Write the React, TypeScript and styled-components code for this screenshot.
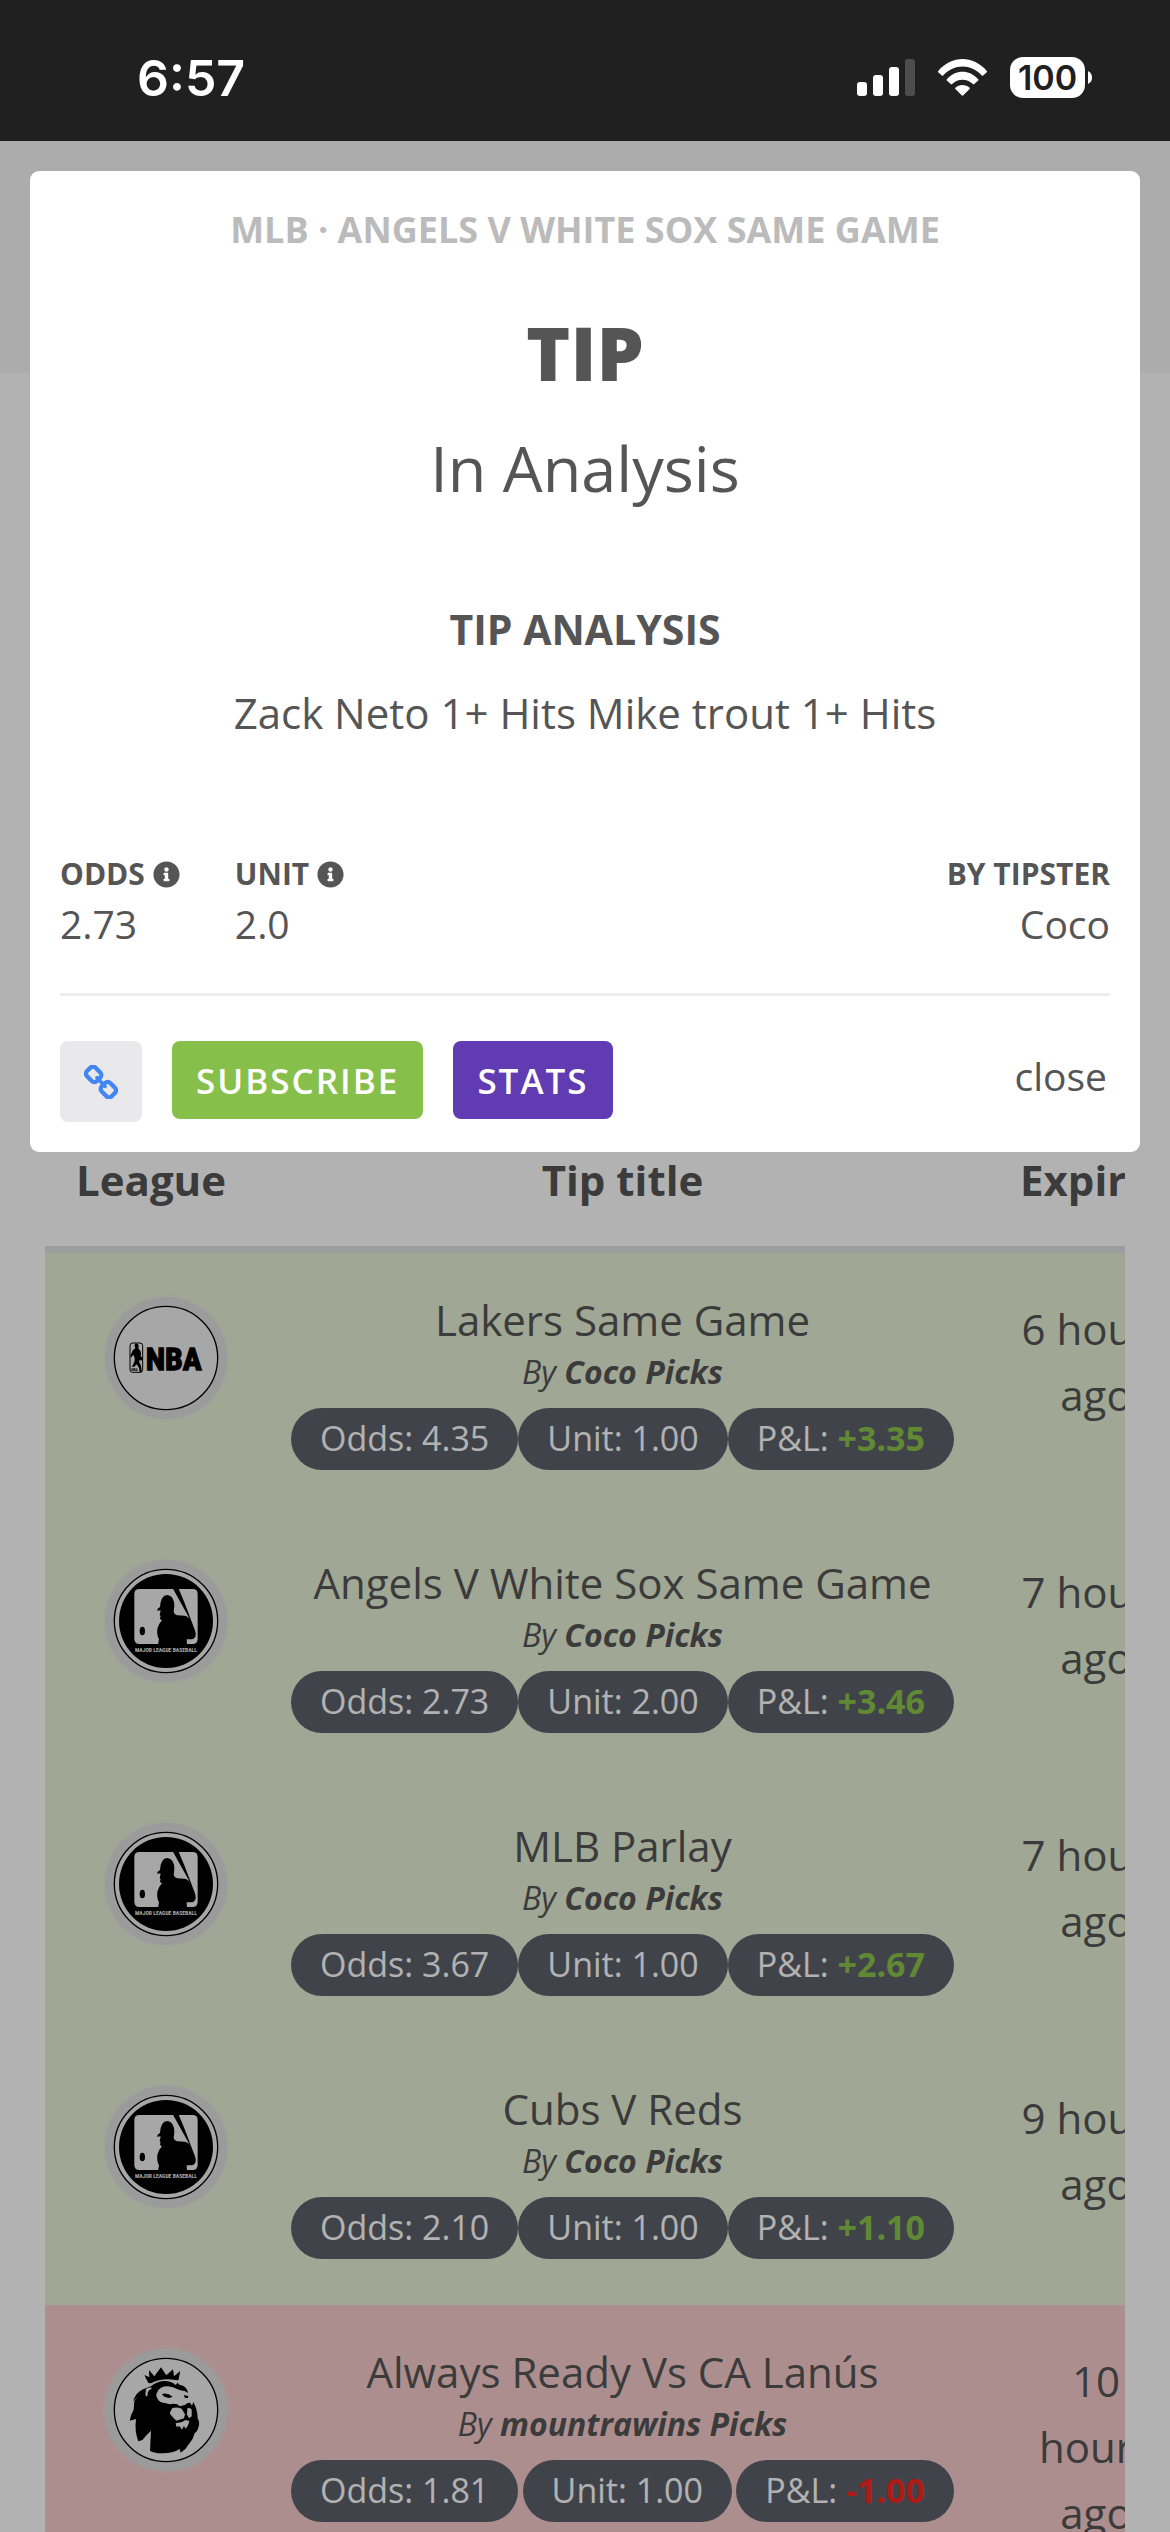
import React from "react";
import styled, { createGlobalStyle } from "styled-components";
import { FaInfoCircle } from "react-icons/fa";

type League = "nba" | "mlb" | "epl";

interface Tip {
  id: number;
  league: League;
  title: string;
  tipster: string;
  odds: string;
  unit: string;
  profit: string;
  won: boolean;
  expires: string;
}

const tips: Tip[] = [
  { id: 1, league: "nba", title: "Lakers Same Game", tipster: "Coco Picks", odds: "4.35", unit: "1.00", profit: "+3.35", won: true, expires: "6 hours ago" },
  { id: 2, league: "mlb", title: "Angels V White Sox Same Game", tipster: "Coco Picks", odds: "2.73", unit: "2.00", profit: "+3.46", won: true, expires: "7 hours ago" },
  { id: 3, league: "mlb", title: "MLB Parlay", tipster: "Coco Picks", odds: "3.67", unit: "1.00", profit: "+2.67", won: true, expires: "7 hours ago" },
  { id: 4, league: "mlb", title: "Cubs V Reds", tipster: "Coco Picks", odds: "2.10", unit: "1.00", profit: "+1.10", won: true, expires: "9 hours ago" },
  { id: 5, league: "epl", title: "Always Ready Vs CA Lanús", tipster: "mountrawins Picks", odds: "1.81", unit: "1.00", profit: "-1.00", won: false, expires: "10 hours ago" },
];

const GlobalStyle = createGlobalStyle`
  * {
    box-sizing: border-box;
  }

  body {
    margin: 0;
    background: #fff;
    color: #555;
    font-family: "Open Sans", "Noto Sans", sans-serif;
    font-size: 42px;
  }
`;

const Screen = styled.div`
  position: relative;
  display: flex;
  flex-direction: column;
  height: 100vh;
  overflow: hidden;
`;

const StatusBar = styled.header`
  display: flex;
  flex-shrink: 0;
  align-items: center;
  justify-content: space-between;
  height: 141px;
  padding: 14px 78px 0 137px;
  background: #202020;
  color: #fff;
  font-family: Inter, sans-serif;
`;

const Clock = styled.time`
  font-size: 50px;
  font-weight: 600;
  line-height: 60px;
`;

const StatusIcons = styled.div`
  display: flex;
  align-items: center;
  gap: 22px;
`;

const Battery = styled.div`
  display: flex;
  align-items: center;
  gap: 3px;
`;

const BatteryLevel = styled.span`
  width: 75px;
  height: 41px;
  border-radius: 13px;
  background: #fff;
  color: #202020;
  font-size: 34px;
  font-weight: 600;
  line-height: 41px;
  text-align: center;
`;

const Page = styled.main`
  position: relative;
  flex: 1;
  overflow: hidden;
`;

const PageHeader = styled.div`
  height: 232px;
  background: #f6f6f6;
`;

const TableWrapper = styled.div`
  margin: 759px 45px 0;
  overflow: hidden;
`;

const TipsTable = styled.table`
  width: calc(100% + 109px);
  table-layout: fixed;
  border-collapse: separate;
  border-spacing: 0;
`;

const LeagueColumn = styled.col`
  width: 242px;
`;

const ExpiresColumn = styled.col`
  width: 276px;
`;

const HeadCell = styled.th`
  padding: 17px 30px 36px 0;
  border-bottom: 7px solid #dfe1e3;
  font-weight: 700;
  line-height: 61px;

  &:nth-child(2),
  &:last-child {
    padding-right: 0;
  }
`;

const Row = styled.tr<{ $won: boolean }>`
  height: 263px;
  background: ${({ $won }) => ($won ? "#e7f0d6" : "#f7cccc")};
`;

const Cell = styled.td`
  padding: 40px 4px 0;
  text-align: center;
  vertical-align: top;
`;

const ExpiresCell = styled(Cell)`
  padding: 43px 58px 0;
  line-height: 66px;
`;

const TipName = styled.div`
  line-height: 54px;
  white-space: nowrap;
`;

const TipAuthor = styled.div`
  font-size: 32px;
  font-style: italic;
  line-height: 50px;
`;

const Badges = styled.div`
  display: flex;
  justify-content: space-between;
  margin-top: 11px;
`;

const Badge = styled.span`
  padding: 0 29px 2px;
  border-radius: 31px;
  background: #5d616b;
  color: #fff;
  font-size: 34px;
  line-height: 60px;
  white-space: nowrap;
`;

const Profit = styled.strong<{ $won: boolean }>`
  color: ${({ $won }) => ($won ? "#8bc34a" : "#f8281e")};
`;

const Logo = styled.svg`
  display: block;
  width: 122px;
  height: 122px;
  margin: 4px auto 0;
  border-radius: 50%;
  background: #dfdfe0;
  box-shadow: 0 0 4px #dfdfe0;
`;

const LogoText = styled.text`
  font-family: "Roboto Condensed", Roboto, sans-serif;
  font-weight: 700;
`;

const Backdrop = styled.div`
  position: absolute;
  inset: 0;
  padding: 30px;
  background: rgba(0, 0, 0, 0.3);
`;

const Modal = styled.section`
  padding: 34px 30px 30px;
  border-radius: 9px;
  background: #fff;
  text-align: center;
`;

const MatchTitle = styled.h2`
  margin: 0;
  color: #bbb;
  font-size: 36px;
  font-weight: 700;
  line-height: 50px;
  text-transform: uppercase;
`;

const Heading = styled.h1`
  margin: 45px 0 0;
  font-size: 75px;
  font-weight: 800;
  line-height: 104px;
`;

const Status = styled.p`
  margin: 20px 0 0;
  font-size: 63px;
  line-height: 88px;
`;

const AnalysisTitle = styled.h3`
  margin: 88px 0 0;
  font-size: 41px;
  font-weight: 700;
  line-height: 58px;
`;

const AnalysisText = styled.p`
  margin: 26px 0 0;
  line-height: 58px;
`;

const Details = styled.dl`
  display: flex;
  gap: 55px;
  margin: 111px 0 0;
  padding-bottom: 42px;
  border-bottom: 3px solid #ededed;
  text-align: left;
`;

const Detail = styled.div<{ $end?: boolean }>`
  ${({ $end }) => $end && "margin-left: auto; text-align: right;"}
`;

const DetailLabel = styled.dt`
  display: flex;
  align-items: center;
  gap: 8px;
  font-size: 30px;
  font-weight: 700;
  line-height: 42px;

  svg {
    width: 27px;
    height: 27px;
  }
`;

const DetailValue = styled.dd`
  margin: 2px 0 0;
  font-size: 39px;
  line-height: 54px;
`;

const Actions = styled.div`
  display: flex;
  align-items: flex-start;
  gap: 30px;
  margin-top: 45px;
`;

const ShareLink = styled.a`
  display: flex;
  align-items: center;
  justify-content: center;
  width: 82px;
  height: 81px;
  border-radius: 8px;
  background: #e9e9eb;
`;

const ActionButton = styled.button<{ $color: string }>`
  height: 78px;
  padding: 0 24px;
  border: 0;
  border-radius: 8px;
  background: ${({ $color }) => $color};
  color: #fff;
  font-family: inherit;
  font-size: 35px;
  font-weight: 600;
  letter-spacing: 2px;
  text-transform: uppercase;
`;

const CloseButton = styled.button`
  margin-left: auto;
  padding: 0 3px;
  border: 0;
  background: none;
  color: inherit;
  font-family: inherit;
  font-size: 39px;
  line-height: 70px;
`;

const SignalIcon = () => (
  <svg width="58" height="37" viewBox="0 0 58 37" fill="#fff" aria-hidden="true">
    <rect x="0" y="23" width="10" height="14" rx="3" />
    <rect x="16" y="16" width="10" height="21" rx="3" />
    <rect x="32" y="8" width="10" height="29" rx="3" />
    <rect x="48" y="0" width="10" height="37" rx="3" fill="#4d4d4d" />
  </svg>
);

const WifiIcon = () => (
  <svg width="51" height="37" viewBox="0 0 153 112" fill="#fff" aria-hidden="true">
    <path d="M3 36C44-12 109-12 150 36Q152 38 150 40L139 50Q137 52 135 50C101 14 52 14 18 50Q16 52 14 50L3 40Q1 38 3 36Z" />
    <path d="M29 61C56 31 97 31 124 61Q126 63 124 65L112 76Q110 78 108 76C90 58 63 58 45 76Q43 78 41 76L29 65Q27 63 29 61Z" />
    <path d="M55 87C66 76 87 76 98 87Q100 89 98 91L79 110Q76.500 112 74 110L55 91Q53 89 55 87Z" />
  </svg>
);

const ChainIcon = () => (
  <svg width="34" height="34" viewBox="0 0 102 102" fill="none" stroke="#4285f4" strokeWidth="13" aria-hidden="true">
    <rect x="8" y="10" width="42" height="36" rx="11" transform="rotate(45 29 28)" />
    <rect x="52" y="56" width="42" height="36" rx="11" transform="rotate(45 73 74)" />
    <path d="M39 38L63 64" strokeWidth="11" strokeLinecap="round" />
  </svg>
);

const LogoRing = ({ cy }: { cy: number }) => (
  <circle cx="229" cy={cy} r="155" fill="#efefef" stroke="#000" strokeWidth="4" />
);

const NbaLogo = () => (
  <Logo viewBox="46 52 366 366" role="img" aria-label="NBA">
    <LogoRing cy={235} />
    <rect x="121" y="190" width="38" height="88" rx="8" fill="#efefef" stroke="#000" strokeWidth="3" />
    <path d="M136 192Q146 189 147 200L146 206Q153 212 154 222L153 230Q160 233 159 240Q155 244 149 241L149 249Q156 257 156 277L150 277Q149 262 141 254L134 261L126 261Q137 247 135 235L131 225L124 234L122 228L130 211L137 206Q133 199 136 192Z" />
    <LogoText x="125" y="273" fontSize="11">NBA</LogoText>
    <LogoText x="168" y="270" fontSize="95" stroke="#000" strokeWidth="4">NBA</LogoText>
  </Logo>
);

const MlbLogo = () => (
  <Logo viewBox="46 60 366 366" role="img" aria-label="MLB">
    <LogoRing cy={243} />
    <circle cx="229" cy="243" r="141" />
    <rect x="134" y="147" width="190" height="165" rx="14" fill="#efefef" />
    <ellipse cx="158" cy="273" rx="8" ry="13" />
    <path d="M250 146H267L284 187L313 263Q320 278 317 290Q312 298 305 298L291 298L292 314H205L208 298Q201 286 203 266Q208 250 217 241Q208 238 213 228L210 226L213 211L202 212Q203 204 211 201Q213 166 233 165Q254 167 254 199L252 216Q254 224 262 226L285 227Q292 228 298 234L302 240Z" />
    <LogoText x="229" y="337" fontSize="17" textAnchor="middle" fill="#efefef">MAJOR LEAGUE BASEBALL</LogoText>
  </Logo>
);

const EplLogo = () => (
  <Logo viewBox="46 60 366 366" role="img" aria-label="Premier League">
    <LogoRing cy={243} />
    <path d="M176 162L164 138L179 145L178 123L194 142L214 115L230 139L250 121L253 142L272 126L266 154L257 153Q215 146 184 163Z" />
    <path d="M184 172Q199 158 223 156Q246 156 258 168L264 161Q267 168 280 170Q292 176 295 192Q286 184 272 184L262 180Q245 170 228 172Q207 176 203 190Q196 197 204 210Q211 222 226 222L240 226Q253 222 263 226L270 232L286 228Q294 220 301 221L307 230L311 219Q324 243 324 268Q332 283 326 296L322 306L315 313Q311 330 300 342L287 360L273 371L270 360Q247 374 216 373Q191 372 181 365L184 305Q170 318 158 333L146 337Q134 307 139 270L120 275Q123 257 132 242L134 216L144 205L130 217Q139 190 160 181L172 176Z" />
    <path d="M169 180Q177 174 187 176L184 181Q174 183 173 201Q168 205 167 195Z" fill="#efefef" />
    <path d="M207 190Q222 177 244 180Q256 183 260 195Q273 198 280 206L289 202L298 210L300 219L288 223L280 217L266 221L249 211Q227 215 205 203Z" fill="#efefef" />
    <path d="M217 195Q233 190 249 203L240 207Q221 206 217 195ZM282 198L296 201L295 207L286 207Z" />
    <path d="M248 237Q262 233 276 239L286 256L283 268L260 275Q245 262 240 252Z" fill="#efefef" />
    <path d="M293 238Q303 235 306 242L306 262L298 268L292 256Z" fill="#efefef" />
    <path d="M258 283L277 279L288 273L299 276Q296 292 287 299L283 290L277 302L270 292L260 293Z" fill="#efefef" />
  </Logo>
);

const logos: Record<League, React.FC> = {
  nba: NbaLogo,
  mlb: MlbLogo,
  epl: EplLogo,
};

interface TipRowProps {
  tip: Tip;
}

const TipRow: React.FC<TipRowProps> = ({ tip }) => {
  const LeagueLogo = logos[tip.league];

  return (
    <Row $won={tip.won}>
      <Cell>
        <LeagueLogo />
      </Cell>
      <Cell>
        <TipName>{tip.title}</TipName>
        <TipAuthor>
          By <strong>{tip.tipster}</strong>
        </TipAuthor>
        <Badges>
          <Badge>Odds: {tip.odds}</Badge>
          <Badge>Unit: {tip.unit}</Badge>
          <Badge>
            P&amp;L: <Profit $won={tip.won}>{tip.profit}</Profit>
          </Badge>
        </Badges>
      </Cell>
      <ExpiresCell>{tip.expires}</ExpiresCell>
    </Row>
  );
};

const TipModal = () => (
  <Modal role="dialog" aria-labelledby="tip-heading">
    <MatchTitle>MLB · Angels V White Sox Same Game</MatchTitle>
    <Heading id="tip-heading">TIP</Heading>
    <Status>In Analysis</Status>
    <AnalysisTitle>TIP ANALYSIS</AnalysisTitle>
    <AnalysisText>Zack Neto 1+ Hits Mike trout 1+ Hits</AnalysisText>
    <Details>
      <Detail>
        <DetailLabel>
          ODDS <FaInfoCircle />
        </DetailLabel>
        <DetailValue>2.73</DetailValue>
      </Detail>
      <Detail>
        <DetailLabel>
          UNIT <FaInfoCircle />
        </DetailLabel>
        <DetailValue>2.0</DetailValue>
      </Detail>
      <Detail $end>
        <DetailLabel>BY TIPSTER</DetailLabel>
        <DetailValue>Coco</DetailValue>
      </Detail>
    </Details>
    <Actions>
      <ShareLink href="#tip" aria-label="Copy link">
        <ChainIcon />
      </ShareLink>
      <ActionButton type="button" $color="#86c04a">
        Subscribe
      </ActionButton>
      <ActionButton type="button" $color="#613bb1">
        Stats
      </ActionButton>
      <CloseButton type="button">close</CloseButton>
    </Actions>
  </Modal>
);

const App: React.FC = () => {
  return (
    <>
      <GlobalStyle />
      <Screen>
        <StatusBar>
          <Clock>6:57</Clock>
          <StatusIcons>
            <SignalIcon />
            <WifiIcon />
            <Battery>
              <BatteryLevel>100</BatteryLevel>
              <svg width="4" height="13" viewBox="0 0 4 13" aria-hidden="true">
                <path d="M0 0Q4 2 4 6.500T0 13Z" fill="#fff" />
              </svg>
            </Battery>
          </StatusIcons>
        </StatusBar>
        <Page>
          <PageHeader />
          <TableWrapper>
            <TipsTable>
              <colgroup>
                <LeagueColumn />
                <col />
                <ExpiresColumn />
              </colgroup>
              <thead>
                <tr>
                  <HeadCell>League</HeadCell>
                  <HeadCell>Tip title</HeadCell>
                  <HeadCell>Expires</HeadCell>
                </tr>
              </thead>
              <tbody>
                {tips.map((tip) => (
                  <TipRow key={tip.id} tip={tip} />
                ))}
              </tbody>
            </TipsTable>
          </TableWrapper>
          <Backdrop>
            <TipModal />
          </Backdrop>
        </Page>
      </Screen>
    </>
  );
};

export default App;
